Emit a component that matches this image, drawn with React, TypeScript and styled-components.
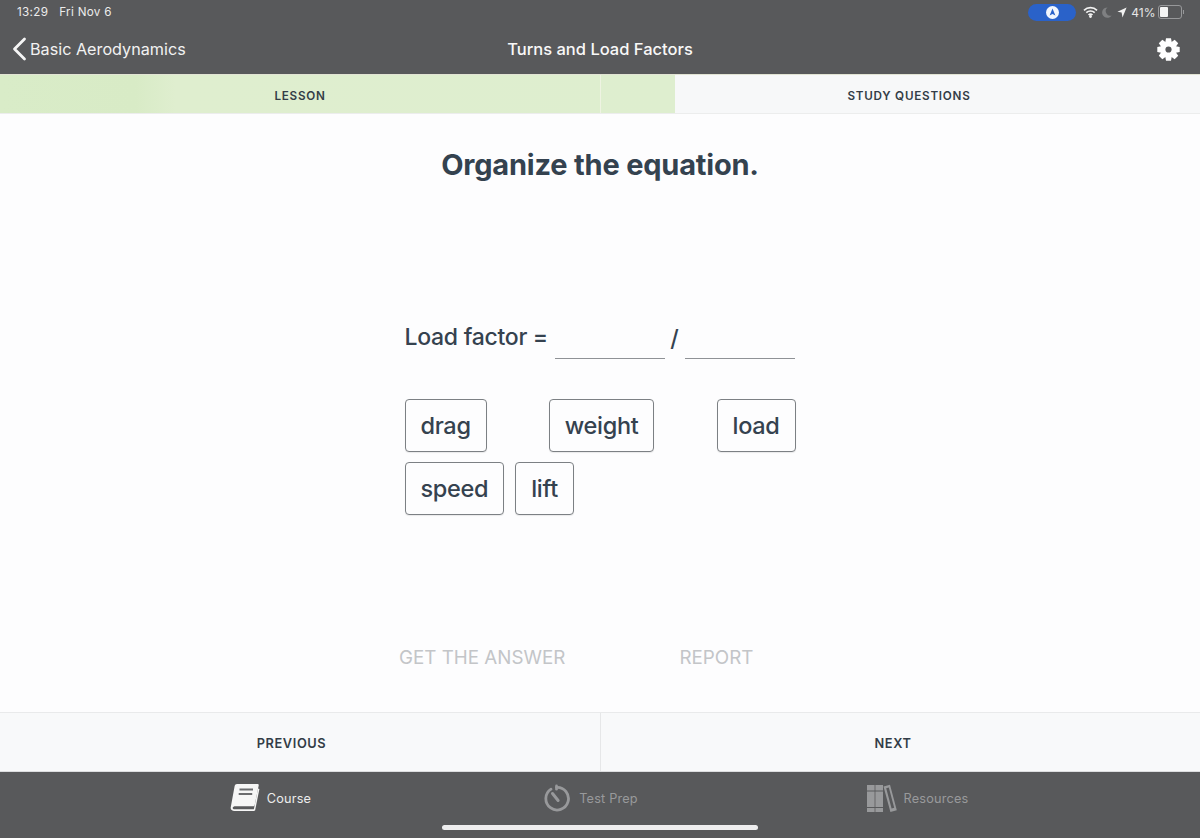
import styled, { createGlobalStyle } from "styled-components";

const GlobalStyle = createGlobalStyle`
	html, body {
		margin: 0;
		padding: 0;
		background: #fdfdfe;
		font-family: Inter, "Liberation Sans", sans-serif;
	}
`;

const Page = styled.div`
	width: 1200px;
	height: 838px;
	display: flex;
	flex-direction: column;
	overflow: hidden;
	background: #fdfdfe;
`;

const TopBar = styled.header`
	height: 74px;
	flex: none;
	background: #58595b;
	color: #f5f5f5;
	display: flex;
	flex-direction: column;
`;
const StatusRow = styled.div`
	height: 24px;
	padding: 0 16px 0 17px;
	display: flex;
	align-items: center;
	justify-content: space-between;
	font-size: 11.7px;
	letter-spacing: 0.3px;
`;
const StatusTime = styled.div`
	display: flex;
	gap: 11px;
	color: #ececec;
`;
const StatusIcons = styled.div`
	display: flex;
	align-items: center;
	color: #e6e6e6;
`;
const AssistPill = styled.div`
	width: 48px;
	height: 17px;
	border-radius: 9px;
	background: #2a62c9;
	margin-right: 7px;
	display: flex;
	align-items: center;
	justify-content: center;
`;
const BatteryText = styled.span`
	font-size: 12px;
	letter-spacing: 0;
	margin: 0 2px 0 3px;
`;
const Battery = styled.div`
	width: 20px;
	height: 10px;
	border: 1px solid #97989a;
	border-radius: 3px;
	padding: 1px;
	display: flex;
`;
const BatteryFill = styled.div`
	width: 8px;
	background: #f4f4f4;
	border-radius: 1px;
`;
const BatteryNub = styled.div`
	width: 1.5px;
	height: 4px;
	margin-left: 1px;
	background: #97989a;
`;
const NavRow = styled.div`
	flex: 1;
	display: grid;
	grid-template-columns: 1fr auto 1fr;
	align-items: center;
	padding: 0 20px;
`;
const BackLink = styled.div`
	display: flex;
	align-items: center;
	gap: 3px;
	margin-left: -8px;
	font-size: 16.2px;
	color: #f2f2f2;
`;
const NavTitle = styled.div`
	font-size: 16.5px;
	font-weight: 500;
	color: #f8f8f8;
`;
const NavRight = styled.div`
	display: flex;
	justify-content: flex-end;
`;

const TabStrip = styled.nav`
	position: relative;
	height: 40px;
	flex: none;
	display: grid;
	grid-template-columns: 1fr 1fr;
	background: #f7f8f9;
	border-top: 1px solid #e2e4d4;
	box-sizing: border-box;
	border-bottom: 1px solid #eceded;
`;
const Progress = styled.div`
	position: absolute;
	left: 0;
	top: 0;
	bottom: 0;
	background: linear-gradient(90deg, #d9ecc8 0%, #d8ebc6 20%, #dfeecf 26%, #deeecf 100%);
`;
const TabItem = styled.div<{ $divider?: boolean; $inset?: number }>`
	position: relative;
	display: flex;
	align-items: center;
	justify-content: center;
	padding: 3px 0 0 ${(props) => props.$inset ?? 0}px;
	font-size: 11.7px;
	font-weight: 600;
	letter-spacing: 0.75px;
	color: #333d47;
	border-left: ${(props) => (props.$divider ? "1px solid #eef3e2" : "none")};
`;

const Main = styled.main`
	flex: 1;
	display: flex;
	flex-direction: column;
	align-items: center;
`;
const Heading = styled.h1`
	margin: 31px 0 0;
	font-size: 29px;
	line-height: 40px;
	font-weight: 700;
	color: #34424f;
	letter-spacing: -0.2px;
`;
const Exercise = styled.div`
	width: 391px;
	margin-top: 131px;
	display: flex;
	flex-direction: column;
`;
const Equation = styled.div`
	display: flex;
	align-items: flex-end;
	height: 44px;
	font-size: 23px;
	font-weight: 550;
	color: #35424f;
`;
const EquationLabel = styled.span`
	width: 150px;
	line-height: 28px;
	margin-bottom: 9px;
	letter-spacing: -0.28px;
	white-space: nowrap;
`;
const Blank = styled.div`
	width: 110px;
	height: 0;
	border-bottom: 1.5px solid #8f9296;
	margin-bottom: 1px;
`;
const Slash = styled.span`
	width: 20px;
	text-align: center;
	font-size: 23px;
	font-weight: 500;
	line-height: 28px;
	margin-bottom: 7px;
`;
const WordBank = styled.div`
	margin-top: 39px;
	display: flex;
	flex-direction: column;
	gap: 10px;
`;
const WordRow = styled.div<{ $spread?: boolean }>`
	display: flex;
	justify-content: ${(props) => (props.$spread ? "space-between" : "flex-start")};
	gap: 11px;
`;
const Word = styled.div`
	height: 53px;
	box-sizing: border-box;
	padding: 0 15px;
	border: 1px solid #7c8084;
	border-radius: 4px;
	background: #fdfdfe;
	box-shadow: 0 1px 1px rgba(0, 0, 0, 0.08);
	display: flex;
	align-items: center;
	font-size: 23.5px;
	font-weight: 550;
	color: #35424f;
	letter-spacing: -0.32px;
`;
const Actions = styled.div`
	width: 402px;
	margin-top: 131px;
	display: flex;
	font-size: 18.8px;
	line-height: 24px;
	color: #c3c5c8;
	gap: 114px;
`;

const PagerBar = styled.div`
	height: 60px;
	flex: none;
	box-sizing: border-box;
	display: grid;
	grid-template-columns: 1fr 1fr;
	background: #f8f9fa;
	border-top: 1px solid #e9eaeb;
	border-bottom: 1px solid #dcdddf;
`;
const PagerItem = styled.div<{ $divider?: boolean; $shift: number }>`
	display: flex;
	align-items: center;
	justify-content: center;
	padding: 2px ${(props) => props.$shift}px 0 0;
	font-size: 12.8px;
	font-weight: 600;
	letter-spacing: 0.6px;
	color: #333d47;
	border-left: ${(props) => (props.$divider ? "1px solid #e6e7e8" : "none")};
`;

const BottomBar = styled.footer`
	position: relative;
	height: 66px;
	flex: none;
	background: #58595b;
	display: grid;
	grid-template-columns: 319px 321px 333px;
	padding: 11px 0 0 111px;
	box-sizing: border-box;
	align-items: start;
`;
const BottomTab = styled.div<{ $active?: boolean }>`
	display: flex;
	align-items: center;
	justify-content: center;
	gap: 7px;
	height: 30px;
	font-size: 12.7px;
	letter-spacing: 0.2px;
	color: ${(props) => (props.$active ? "#ececec" : "#98999b")};
`;
const HomeIndicator = styled.div`
	position: absolute;
	left: 442px;
	bottom: 8px;
	width: 316px;
	height: 5px;
	border-radius: 3px;
	background: #ededee;
`;

function ChevronBack() {
	return (
		<svg width="15" height="24" viewBox="0 0 15 24" fill="none">
			<path d="M12.5 2 2.5 12l10 10" stroke="#f5f5f5" strokeWidth="2.8" strokeLinecap="round" strokeLinejoin="round" />
		</svg>
	);
}

function GearIcon() {
	return (
		<svg width="23" height="23" viewBox="0 0 23 23" fill="#fff">
			{[0, 45, 90, 135, 180, 225, 270, 315].map((angle) => (
				<path key={angle} d="M9 0.3h5l0.9 5h-6.800z" transform={`rotate(${angle} 11.5 11.5)`} />
			))}
			<circle cx="11.5" cy="11.5" r="7.6" />
			<circle cx="11.5" cy="11.5" r="3.1" fill="#58595b" />
		</svg>
	);
}

function AssistBadge() {
	return (
		<svg width="13" height="13" viewBox="0 0 13 13">
			<circle cx="6.5" cy="6.5" r="6.5" fill="#f2f6fd" />
			<path d="M6.5 2.6 3.6 9.6l2.9-1.5 2.9 1.5z" fill="#2a62c9" />
		</svg>
	);
}

function Wifi() {
	return (
		<svg width="15" height="12" viewBox="0 0 15 12" fill="none" stroke="#f2f2f2" strokeWidth="1.7">
			<path d="M1 4.3a9.4 9.4 0 0 1 13 0" />
			<path d="M3.3 6.7a6 6 0 0 1 8.4 0" />
			<path d="M5.5 9a2.9 2.9 0 0 1 4 0" />
			<circle cx="7.5" cy="10.5" r="0.6" fill="#f2f2f2" />
		</svg>
	);
}

function Moon() {
	return (
		<svg width="10" height="11" viewBox="0 0 10 11" style={{ margin: "0 5px 0 4px" }}>
			<path d="M5.5.4a5.2 5.2 0 1 0 4.2 8 4.6 4.6 0 0 1-4.2-8z" fill="#7f8082" />
		</svg>
	);
}

function LocationArrow() {
	return (
		<svg width="10" height="11" viewBox="0 0 10 11" style={{ marginRight: 1 }}>
			<path d="M9.6.6 0.4 4.8l4.2.6.9 5z" fill="#f2f2f2" />
		</svg>
	);
}

function BookIcon() {
	return (
		<svg width="30" height="30" viewBox="0 0 30 30" fill="none">
			<path
				d="M7 1h20.5c.9 0 1.4.7 1.2 1.500l-4 19.500c-.2.8-.8 1.300-1.600 1.300H5.500c-1.600 0-2.700.7-2.800 1.500-.1.800.7 1.400 2 1.400h20l-.4 1.800H4.500C2 28 .4 26.600.7 24.600L4.600 3.200C4.900 1.900 5.800 1 7 1z"
				fill="#f6f6f6"
			/>
			<path d="M28 5.500 23.600 27.600h1.500L29.400 6z" fill="#f6f6f6" />
			<path d="M9.500 6.500h13.500M8.700 11h13.500" stroke="#6b6c6e" strokeWidth="2" />
		</svg>
	);
}

function TimerIcon() {
	return (
		<svg width="27" height="28" viewBox="0 0 26 28" fill="none" stroke="#98999b" style={{ marginRight: 2 }}>
			<path d="M7.500 5.200A11.300 11.300 0 1 0 13 3.400" strokeWidth="2.800" strokeLinecap="round" />
			<path d="M13 1.800v3.400" strokeWidth="2.600" strokeLinecap="round" />
			<path d="M9 9.500l5.600 7" strokeWidth="3" strokeLinecap="round" />
		</svg>
	);
}

function LibraryIcon() {
	return (
		<svg width="30" height="29" viewBox="0 0 30 29" fill="#98999b">
			<rect x="0" y="1" width="7.600" height="5.500" />
			<rect x="0" y="7.500" width="7.600" height="15.500" />
			<rect x="0" y="24" width="7.600" height="4" />
			<rect x="8.400" y="1" width="7.600" height="5.500" />
			<rect x="8.400" y="7.500" width="7.600" height="15.500" />
			<rect x="8.400" y="24" width="7.600" height="4" />
			<path d="M16.500 2.500 23 .8l6.800 25.400-6.400 1.800zM19.200 4.200l5.400 20.400 2.600-.8L21.800 3.500z" fillRule="evenodd" />
		</svg>
	);
}

function App() {
	return (
		<Page>
			<GlobalStyle />
			<TopBar>
				<StatusRow>
					<StatusTime>
						<span>13:29</span>
						<span>Fri Nov 6</span>
					</StatusTime>
					<StatusIcons>
						<AssistPill>
							<AssistBadge />
						</AssistPill>
						<Wifi />
						<Moon />
						<LocationArrow />
						<BatteryText>41%</BatteryText>
						<Battery>
							<BatteryFill />
						</Battery>
						<BatteryNub />
					</StatusIcons>
				</StatusRow>
				<NavRow>
					<BackLink>
						<ChevronBack />
						Basic Aerodynamics
					</BackLink>
					<NavTitle>Turns and Load Factors</NavTitle>
					<NavRight>
						<GearIcon />
					</NavRight>
				</NavRow>
			</TopBar>

			<TabStrip>
				<Progress style={{ width: `${(675 / 1200) * 100}%` }} />
				<TabItem>LESSON</TabItem>
				<TabItem $divider $inset={17}>STUDY QUESTIONS</TabItem>
			</TabStrip>

			<Main>
				<Heading>Organize the equation.</Heading>
				<Exercise>
					<Equation>
						<EquationLabel>Load factor =</EquationLabel>
						<Blank />
						<Slash>/</Slash>
						<Blank />
					</Equation>
					<WordBank>
						<WordRow $spread>
							<Word>drag</Word>
							<Word>weight</Word>
							<Word>load</Word>
						</WordRow>
						<WordRow>
							<Word>speed</Word>
							<Word>lift</Word>
						</WordRow>
					</WordBank>
				</Exercise>
				<Actions>
					<span>GET THE ANSWER</span>
					<span>REPORT</span>
				</Actions>
			</Main>

			<PagerBar>
				<PagerItem $shift={17}>PREVIOUS</PagerItem>
				<PagerItem $divider $shift={15}>NEXT</PagerItem>
			</PagerBar>

			<BottomBar>
				<BottomTab $active>
					<BookIcon />
					Course
				</BottomTab>
				<BottomTab>
					<TimerIcon />
					Test Prep
				</BottomTab>
				<BottomTab>
					<LibraryIcon />
					Resources
				</BottomTab>
				<HomeIndicator />
			</BottomBar>
		</Page>
	);
}

export default App;
